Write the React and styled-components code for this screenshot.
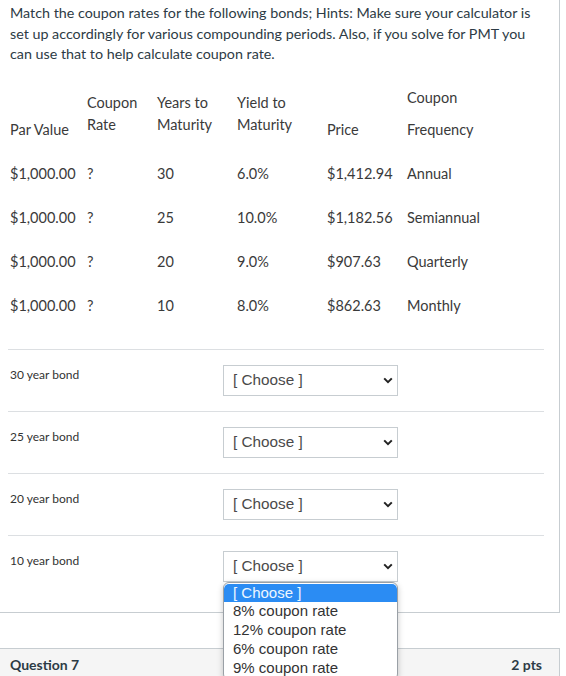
import React from 'react';
import styled, { createGlobalStyle } from 'styled-components';

const Global = createGlobalStyle`
  html, body { margin: 0; padding: 0; background: #fff; overflow: hidden; }
  body {
    font-family: Lato, "Noto Sans", sans-serif;
    color: #2d3b45;
    font-variant-numeric: slashed-zero;
  }
  * { box-sizing: border-box; }
`;

const Page = styled.div`
  width: 566px;
  height: 676px;
  overflow: hidden;
`;

const QuestionBox = styled.section`
  width: 560px;
  border-right: 1px solid #c7cdd1;
  border-bottom: 1px solid #c7cdd1;
  padding: 3px 0 16px 0;
`;

const Intro = styled.p`
  margin: 0;
  padding: 0 10px;
  font-size: 14.3px;
  line-height: 20.5px;
`;

const BondTable = styled.div`
  display: grid;
  grid-template-columns: 77px 70px 80px 90px 80px 1fr;
  padding-left: 10px;
  margin-top: 22px;
  font-size: 14.5px;
  line-height: 21.5px;
  color: #3a3a3a;
`;

const HeadCell = styled.div`
  padding-top: ${p => p.$offset || 0}px;
  height: 54px;
  display: flex;
  flex-direction: column;
`;

const HeadPara = styled.span`
  display: block;
  margin-top: ${p => p.$gap || 0}px;
`;

const BodyCell = styled.div`
  height: 44px;
  display: flex;
  align-items: center;
  margin-top: ${p => (p.$first ? 11 : 0)}px;
`;

const Answers = styled.div`
  margin: 21px 15px 0 8px;
`;

const AnswerRow = styled.div`
  display: flex;
  align-items: flex-start;
  border-top: 1px solid #dcdfe2;
  padding: 15px 0 ${p => (p.$last ? 14 : 15)}px 2px;
`;

const BondLabel = styled.div`
  width: 213px;
  margin-top: 2px;
  font-size: 12px;
  line-height: 16px;
  color: #333;
`;

const SelectWrap = styled.div`
  position: relative;
  width: 175px;
`;

const SelectBox = styled.div`
  height: 31px;
  border: 1px solid #c7cdd1;
  background: #fff;
  display: flex;
  align-items: center;
  justify-content: space-between;
  padding: 0 4px 0 9px;
  font-family: "Liberation Sans", Arial, sans-serif;
  font-size: 15.3px;
  color: #4a4a4a;
`;

const Chevron = () => (
  <svg width="10" height="7" viewBox="0 0 10 7" aria-hidden="true">
    <path d="M1.2 1.4 L5 5.2 L8.8 1.4" fill="none" stroke="#222" strokeWidth="2" />
  </svg>
);

const OptionList = styled.ul`
  position: absolute;
  top: 31px;
  left: 0;
  width: 175px;
  margin: 0;
  padding: 1px 0 2px;
  list-style: none;
  background: #fff;
  border: 1px solid #9aa0a6;
  border-radius: 6px;
  box-shadow: 0 2px 6px rgba(0, 0, 0, 0.22);
  font-family: "Liberation Sans", Arial, sans-serif;
  font-size: 15px;
  line-height: 18.8px;
  color: #333;
  z-index: 5;
  overflow: hidden;
`;

const OptionItem = styled.li`
  padding: 0 9px;
  background: ${p => (p.$active ? '#2b8cf3' : 'transparent')};
  color: ${p => (p.$active ? '#eef6ff' : '#333')};
  border-radius: ${p => (p.$active ? '5px 5px 0 0' : '0')};
`;

const NextHeader = styled.header`
  margin-top: 35px;
  width: 560px;
  height: 60px;
  background: #f5f5f5;
  border-top: 1px solid #c7cdd1;
  border-right: 1px solid #c7cdd1;
  display: flex;
  justify-content: space-between;
  padding: 6px 17px 0 10px;
  font-size: 14px;
  line-height: 20px;
  font-weight: 700;
  color: #2d3b45;
`;

const bonds = [
  { par: '$1,000.00', years: '30', ytm: '6.0%', price: '$1,412.94', freq: 'Annual' },
  { par: '$1,000.00', years: '25', ytm: '10.0%', price: '$1,182.56', freq: 'Semiannual' },
  { par: '$1,000.00', years: '20', ytm: '9.0%', price: '$907.63', freq: 'Quarterly' },
  { par: '$1,000.00', years: '10', ytm: '8.0%', price: '$862.63', freq: 'Monthly' },
];

const options = ['[ Choose ]', '8% coupon rate', '12% coupon rate', '6% coupon rate', '9% coupon rate'];

export default function App() {
  return (
    <Page>
      <Global />
      <QuestionBox>
        <Intro>
          Match the coupon rates for the following bonds; Hints: Make sure your calculator is set up
          accordingly for various compounding periods. Also, if you solve for PMT you can use that to
          help calculate coupon rate.
        </Intro>
        <BondTable>
          <HeadCell $offset={32}><HeadPara>Par Value</HeadPara></HeadCell>
          <HeadCell $offset={5.5}><HeadPara>Coupon</HeadPara><HeadPara>Rate</HeadPara></HeadCell>
          <HeadCell $offset={5.5}><HeadPara>Years to</HeadPara><HeadPara>Maturity</HeadPara></HeadCell>
          <HeadCell $offset={5.5}><HeadPara>Yield to</HeadPara><HeadPara>Maturity</HeadPara></HeadCell>
          <HeadCell $offset={32}><HeadPara>Price</HeadPara></HeadCell>
          <HeadCell $offset={0}>
            <HeadPara>Coupon</HeadPara>
            <HeadPara $gap={10.5}>Frequency</HeadPara>
          </HeadCell>
          {bonds.map((b, i) => (
            <React.Fragment key={i}>
              <BodyCell $first={i === 0}>{b.par}</BodyCell>
              <BodyCell $first={i === 0}>?</BodyCell>
              <BodyCell $first={i === 0}>{b.years}</BodyCell>
              <BodyCell $first={i === 0}>{b.ytm}</BodyCell>
              <BodyCell $first={i === 0}>{b.price}</BodyCell>
              <BodyCell $first={i === 0}>{b.freq}</BodyCell>
            </React.Fragment>
          ))}
        </BondTable>
        <Answers>
          {bonds.map((b, i) => (
            <AnswerRow key={i} $last={i === bonds.length - 1}>
              <BondLabel>{b.years} year bond</BondLabel>
              <SelectWrap>
                <SelectBox>
                  <span>[ Choose ]</span>
                  <Chevron />
                </SelectBox>
                {i === bonds.length - 1 && (
                  <OptionList role="listbox">
                    {options.map((o, j) => (
                      <OptionItem key={o} $active={j === 0}>{o}</OptionItem>
                    ))}
                  </OptionList>
                )}
              </SelectWrap>
            </AnswerRow>
          ))}
        </Answers>
      </QuestionBox>
      <NextHeader>
        <span>Question 7</span>
        <span>2 pts</span>
      </NextHeader>
    </Page>
  );
}
